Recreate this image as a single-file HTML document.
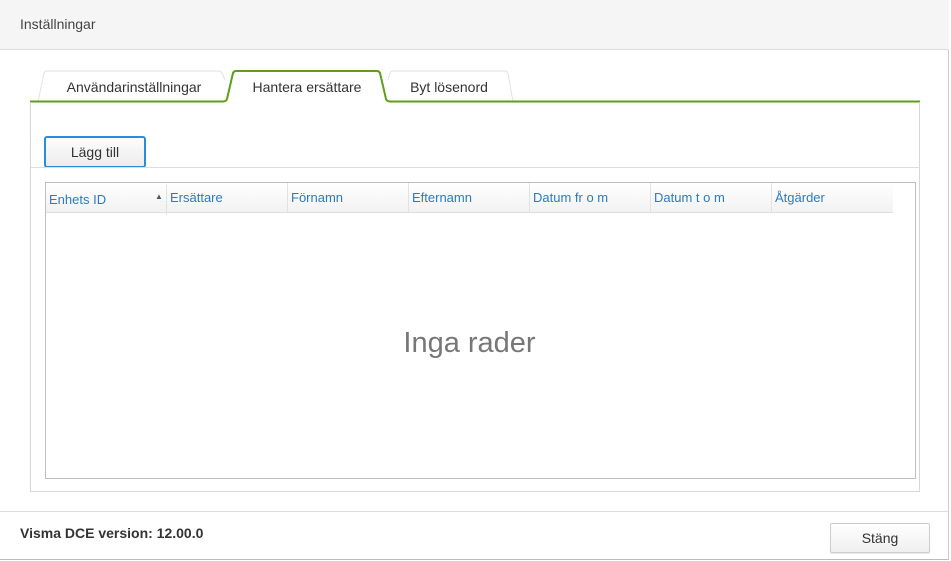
<!DOCTYPE html>
<html><head><meta charset="utf-8"><style>
*{box-sizing:border-box;margin:0;padding:0}
body{width:951px;height:561px;background:#fff;font-family:"Liberation Sans","DejaVu Sans",sans-serif;color:#333;position:relative;overflow:hidden}
.hdr{position:absolute;left:0;top:0;width:949px;height:50px;background:#f5f5f5;border-bottom:1px solid #ddd;font-size:14px;padding:16px 20px;color:#444}
.win{position:absolute;left:0;top:0;width:949px;height:560px;border-right:1px solid #ccc;border-bottom:1px solid #bbb}
.tab{position:absolute;top:72px;height:30px;font-size:14px;text-align:center;line-height:31px;color:#333}
.panel{position:absolute;left:30px;top:101px;width:890px;height:390px;border:1px solid #d6d6d6;border-top:2px solid #5d9e1a}
.btn{position:absolute;left:44px;top:136px;width:102px;height:32px;border:2px solid #2a8ddc;border-radius:3px;background:linear-gradient(#fdfdfd,#ececec);font-size:14px;text-align:center;line-height:28px}
.sep{position:absolute;left:31px;top:167px;width:889px;border-top:1px solid #ddd}
.grid{position:absolute;left:45px;top:182px;width:871px;height:297px;border:1px solid #bfbfbf}
.gh{position:absolute;left:0;top:0;width:847px;height:30px;background:linear-gradient(#fff,#f2f2f2);border-bottom:1px solid #ddd}
.gh div{position:absolute;top:0;height:30px;font-size:13px;color:#2a7bc0;line-height:30px;padding-left:3px;border-right:1px solid #e2e2e2}
.empty{position:absolute;left:0;top:144px;width:847px;text-align:center;font-size:29px;color:#777}
.ftr{position:absolute;left:0;top:511px;width:949px;border-top:1px solid #ddd}
.ver{position:absolute;left:20px;top:525px;font-size:14px;font-weight:bold;color:#333}
.close{position:absolute;left:830px;top:523px;width:100px;height:30px;border:1px solid #ccc;border-radius:2px;background:linear-gradient(#fff,#efefef);font-size:14px;text-align:center;line-height:28px;box-shadow:0 1px 1px rgba(0,0,0,.1)}
</style></head><body>
<div class="win"></div>
<div class="hdr">Inställningar</div>
<svg style="position:absolute;left:0;top:60px" width="951" height="50">
<path d="M38 42 L44 13 Q45 11 47 11 L219 11 Q221 11 222 13 L225 20" fill="#fff" stroke="#e2e2e2"/>
<path d="M388 20 L390 13 Q391 11 393 11 L505 11 Q507 11 508 13 L513 42" fill="#fff" stroke="#e2e2e2"/>
<path d="M30 41.5 L223 41.5 Q226 41.5 227 39 L233 13 Q234 11 236 11 L377 11 Q379 11 380 13 L386 39 Q387 41.5 390 41.5 L920 41.5" fill="#fff" stroke="#5d9e1a" stroke-width="2"/>
</svg>
<div class="panel" style="border-top:none;top:102px"></div>
<div class="tab" style="left:48px;width:172px">Användarinställningar</div>
<div class="tab" style="left:235px;width:144px">Hantera ersättare</div>
<div class="tab" style="left:393px;width:112px">Byt lösenord</div>
<div class="btn">Lägg till</div>
<div class="sep"></div>
<div class="grid">
<div class="gh">
<div style="left:0;width:121px;top:2px">Enhets ID<span style="position:absolute;left:109px;top:-3px;font-size:8px;color:#555">▲</span></div>
<div style="left:121px;width:121px">Ersättare</div>
<div style="left:242px;width:121px">Förnamn</div>
<div style="left:363px;width:121px">Efternamn</div>
<div style="left:484px;width:121px">Datum fr o m</div>
<div style="left:605px;width:121px">Datum t o m</div>
<div style="left:726px;width:121px;border-right:none">Åtgärder</div>
</div>
<div class="empty">Inga rader</div>
</div>
<div class="ftr"></div>
<div class="ver">Visma DCE version: 12.00.0</div>
<div class="close">Stäng</div>
</body></html>
